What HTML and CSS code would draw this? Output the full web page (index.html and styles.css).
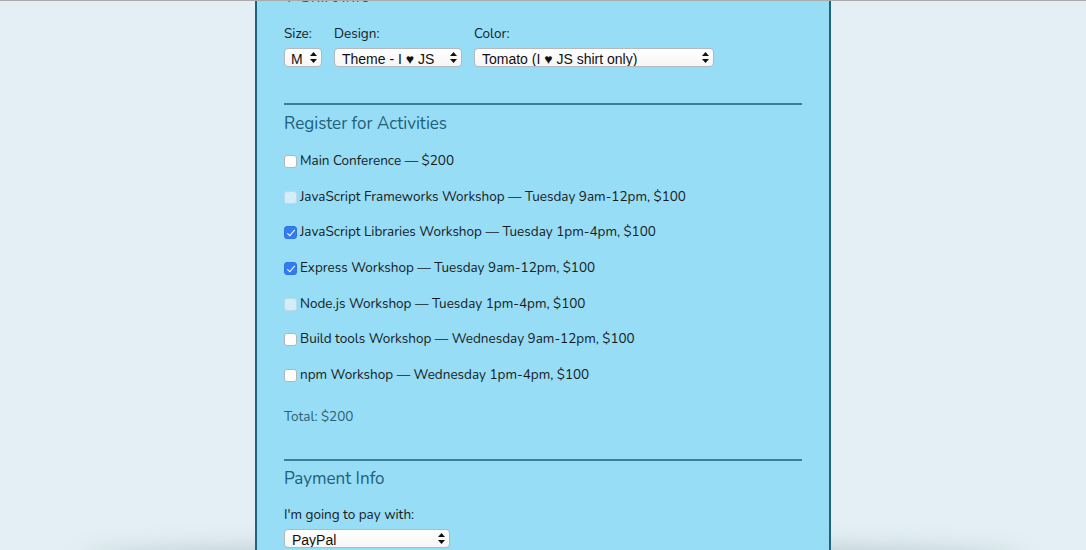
FILE: index.html
```html
<!DOCTYPE html>
<html lang="en">
<head>
<meta charset="utf-8">
<title>Register</title>
<link rel="stylesheet" href="styles.css">
</head>
<body>
<div class="page">
  <form class="panel">
    <fieldset class="section shirt">
      <legend class="legend">T-Shirt Info</legend>
      <div class="shirt-row">
        <div class="field">
          <label class="label">Size:</label>
          <div class="select-wrap w-size">
            <select class="select"><option>M</option></select>
            <svg class="arrows" viewBox="0 0 7 11" width="7" height="11"><path d="M3.5 0 L7 4 L0 4 Z M0 7 L7 7 L3.5 11 Z" fill="#111"/></svg>
          </div>
        </div>
        <div class="field">
          <label class="label">Design:</label>
          <div class="select-wrap w-design">
            <select class="select"><option>Theme - I ♥ JS</option></select>
            <svg class="arrows" viewBox="0 0 7 11" width="7" height="11"><path d="M3.5 0 L7 4 L0 4 Z M0 7 L7 7 L3.5 11 Z" fill="#111"/></svg>
          </div>
        </div>
        <div class="field">
          <label class="label">Color:</label>
          <div class="select-wrap w-color">
            <select class="select"><option>Tomato (I ♥ JS shirt only)</option></select>
            <svg class="arrows" viewBox="0 0 7 11" width="7" height="11"><path d="M3.5 0 L7 4 L0 4 Z M0 7 L7 7 L3.5 11 Z" fill="#111"/></svg>
          </div>
        </div>
      </div>
    </fieldset>

    <fieldset class="section activities">
      <legend class="legend">Register for Activities</legend>
      <div class="activity-list">
        <label class="activity"><input type="checkbox" class="check"> Main Conference — $200</label>
        <label class="activity"><input type="checkbox" class="check" disabled> JavaScript Frameworks Workshop — Tuesday 9am-12pm, $100</label>
        <label class="activity"><input type="checkbox" class="check" checked> JavaScript Libraries Workshop — Tuesday 1pm-4pm, $100</label>
        <label class="activity"><input type="checkbox" class="check" checked> Express Workshop — Tuesday 9am-12pm, $100</label>
        <label class="activity"><input type="checkbox" class="check" disabled> Node.js Workshop — Tuesday 1pm-4pm, $100</label>
        <label class="activity"><input type="checkbox" class="check"> Build tools Workshop — Wednesday 9am-12pm, $100</label>
        <label class="activity"><input type="checkbox" class="check"> npm Workshop — Wednesday 1pm-4pm, $100</label>
      </div>
      <p class="total">Total: $200</p>
    </fieldset>

    <fieldset class="section payment">
      <legend class="legend">Payment Info</legend>
      <label class="label">I'm going to pay with:</label>
      <div class="select-wrap w-pay">
        <select class="select"><option>PayPal</option></select>
        <svg class="arrows" viewBox="0 0 7 11" width="7" height="11"><path d="M3.5 0 L7 4 L0 4 Z M0 7 L7 7 L3.5 11 Z" fill="#111"/></svg>
      </div>
    </fieldset>
  </form>
  <div class="floor-shadow"></div>
</div>
</body>
</html>
```

FILE: styles.css
```css
* { box-sizing: border-box; }

html, body {
  margin: 0;
  padding: 0;
  height: 100%;
  overflow: hidden;
}

body {
  background: #e3eff4;
  font-family: "Nunito", "Lato", "Noto Sans", sans-serif;
  color: #1c2226;
}

.page {
  position: relative;
  height: 550px;
  border-top: 1px solid #a9abac;
  display: flex;
  justify-content: center;
  overflow: hidden;
}

.panel {
  position: relative;
  z-index: 1;
  width: 576px;
  height: 600px;
  background: #97ddf5;
  border-left: 2px solid #22627a;
  border-right: 2px solid #22627a;
  padding: 0 27px;
  margin: 0;
}

.floor-shadow {
  position: absolute;
  left: 80px;
  right: 60px;
  bottom: -30px;
  height: 30px;
  border-radius: 50%;
  box-shadow: 0 -6px 22px rgba(120, 140, 150, 0.35);
  z-index: 0;
}

.section {
  border: 0;
  margin: 0;
  padding: 0;
  min-width: 0;
}

.legend {
  padding: 0;
  font-size: 17px;
  line-height: 22px;
  color: #21607a;
  height: 22px;
}

.shirt {
  margin-top: -15px;
  padding-bottom: 36px;
  border-bottom: 2px solid #3a7e97;
}

.shirt-row {
  display: flex;
  gap: 12px;
  margin-top: 17px;
}

.field {
  display: flex;
  flex-direction: column;
  gap: 5px;
}

.label {
  display: block;
  font-size: 13.5px;
  line-height: 18px;
  color: #161b1e;
}

.select-wrap {
  position: relative;
  height: 19px;
}

.select {
  appearance: none;
  -webkit-appearance: none;
  width: 100%;
  height: 19px;
  margin: 0;
  padding: 2px 16px 0 7px;
  border: 1px solid #b3b9bc;
  border-radius: 4px;
  background: linear-gradient(#ffffff, #f6f6f6);
  font-family: "Liberation Sans", Arial, sans-serif;
  font-size: 14px;
  line-height: 16px;
  color: #111;
}

.arrows {
  position: absolute;
  right: 5px;
  top: 4px;
  pointer-events: none;
}

.w-size { width: 38px; }
.w-size .select { padding-left: 6px; }
.w-design { width: 128px; }
.w-color { width: 240px; }
.w-pay { width: 166px; }

.activities {
  margin-top: 8px;
  padding-top: 16px;
  padding-bottom: 33px;
  border-bottom: 2px solid #3a7e97;
}

.activity-list {
  display: flex;
  flex-direction: column;
  gap: 17.67px;
  margin-top: 1px;
}

.activity {
  display: flex;
  align-items: center;
  gap: 3px;
  font-size: 13.5px;
  line-height: 18px;
  color: #161b1e;
}

.check {
  appearance: none;
  -webkit-appearance: none;
  position: relative;
  width: 13px;
  height: 13px;
  margin: 1px 0 0 0;
  flex: none;
  background: #ffffff;
  border: 1px solid #b0b6b9;
  border-radius: 3px;
}

.check:disabled {
  background: #d3eef8;
  border-color: #b9dbe6;
}

.check:checked {
  background: #2f7df6;
  border-color: #2f73de;
}

.check:checked::after {
  content: "";
  position: absolute;
  left: 3.5px;
  top: 1px;
  width: 3px;
  height: 7px;
  border-right: 1.6px solid #fff;
  border-bottom: 1.6px solid #fff;
  transform: rotate(40deg);
}

.total {
  margin: 24px 0 0 0;
  font-size: 13.5px;
  line-height: 18px;
  color: #2b5f73;
}

.payment {
  margin-top: 7px;
  padding-top: 7px;
}

.payment .label {
  margin-top: 9px;
  margin-bottom: 5px;
}
```
